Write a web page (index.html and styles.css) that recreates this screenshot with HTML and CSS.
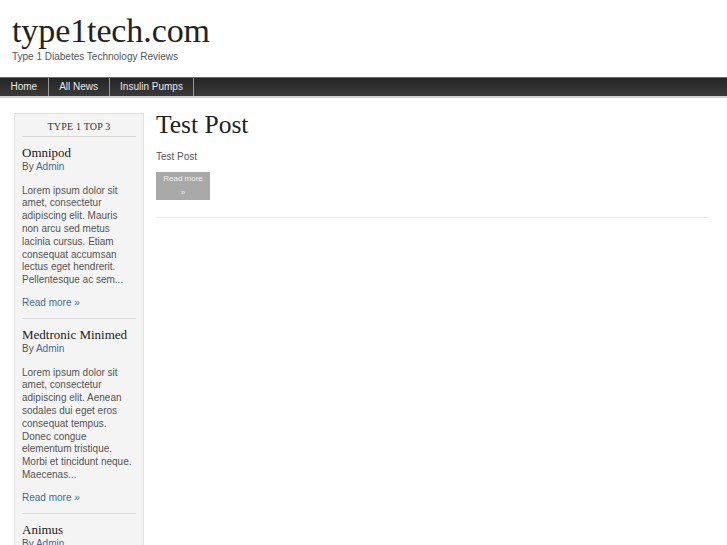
FILE: index.html
```html
<!DOCTYPE html>
<html>
<head>
<meta charset="utf-8">
<title>type1tech.com</title>
<link rel="stylesheet" href="styles.css">
</head>
<body>
<header class="site-header">
  <h1 class="site-title">type1tech.com</h1>
  <p class="site-tagline">Type 1 Diabetes Technology Reviews</p>
</header>
<nav class="main-nav">
  <a class="nav-item" href="#">Home</a>
  <a class="nav-item" href="#">All News</a>
  <a class="nav-item" href="#">Insulin Pumps</a>
</nav>
<div class="layout">
  <aside class="sidebar">
    <h3 class="widget-title">Type 1 Top 3</h3>
    <div class="widget-item">
      <h4 class="item-title">Omnipod</h4>
      <div class="item-by">By <a href="#">Admin</a></div>
      <p class="item-text">Lorem ipsum dolor sit amet, consectetur adipiscing elit. Mauris non arcu sed metus lacinia cursus. Etiam consequat accumsan lectus eget hendrerit. Pellentesque ac sem...</p>
      <a class="item-more" href="#">Read more »</a>
    </div>
    <div class="widget-item">
      <h4 class="item-title">Medtronic Minimed</h4>
      <div class="item-by">By <a href="#">Admin</a></div>
      <p class="item-text">Lorem ipsum dolor sit amet, consectetur adipiscing elit. Aenean sodales dui eget eros consequat tempus. Donec congue elementum tristique. Morbi et tincidunt neque. Maecenas...</p>
      <a class="item-more" href="#">Read more »</a>
    </div>
    <div class="widget-item">
      <h4 class="item-title">Animus</h4>
      <div class="item-by">By <a href="#">Admin</a></div>
      <p class="item-text">Lorem ipsum dolor sit amet, consectetur adipiscing elit.</p>
    </div>
  </aside>
  <main class="content">
    <article class="post">
      <h2 class="post-title">Test Post</h2>
      <p class="post-text">Test Post</p>
      <a class="post-more" href="#"><span class="more-line">Read more</span><span class="more-line">»</span></a>
    </article>
  </main>
</div>
</body>
</html>
```

FILE: styles.css
```css
html, body {
  margin: 0;
  padding: 0;
  background: #fff;
  height: 545px;
  overflow: hidden;
}
body {
  font-family: "Liberation Sans", Arial, sans-serif;
  color: #555;
}
a { text-decoration: none; }

.site-header {
  padding: 14px 0 0 12px;
  height: 63px;
  box-sizing: border-box;
}
.site-title {
  margin: 0;
  font-family: "Liberation Serif", "Times New Roman", serif;
  font-weight: normal;
  font-size: 34px;
  line-height: 34px;
  color: #222;
  letter-spacing: -0.1px;
}
.site-tagline {
  margin: 3px 0 0 0;
  font-size: 10px;
  line-height: 12px;
  color: #555;
}

.main-nav {
  margin-top: 14px;
  display: flex;
  height: 18px;
  border-top: 1px solid #6a6a6a;
  border-bottom: 2px solid #cfcfcf;
  background: linear-gradient(#252525, #3a3a3a);
}
.nav-item {
  display: block;
  padding: 0 10.5px;
  font-size: 10px;
  line-height: 18px;
  color: #e8e8e8;
  border-right: 1px solid #9a9a9a;
}

.layout {
  display: flex;
  align-items: flex-start;
  margin-left: 14px;
  width: 695px;
}
.sidebar {
  width: 130px;
  box-sizing: border-box;
  margin-top: 15px;
  padding: 6px 7px 0 7px;
  background: #f4f4f4;
  border: 1px solid #e0e0e0;
  border-bottom: none;
  height: 440px;
  overflow: hidden;
  flex-shrink: 0;
}
.widget-title {
  margin: 0;
  padding-bottom: 2px;
  font-family: "Liberation Serif", "Times New Roman", serif;
  font-weight: normal;
  font-size: 10px;
  line-height: 14px;
  text-transform: uppercase;
  text-align: center;
  letter-spacing: 0.2px;
  color: #333;
  border-bottom: 1px solid #d6d6d6;
}
.widget-item {
  padding: 8px 0 9px 0;
  border-bottom: 1px solid #dcdcdc;
}
.item-title {
  margin: 0;
  font-family: "Liberation Serif", "Times New Roman", serif;
  font-weight: normal;
  font-size: 13px;
  line-height: 16px;
  color: #222;
}
.item-by {
  font-size: 10px;
  line-height: 12px;
  color: #555;
}
.item-by a { color: #3c6d9c; }
.item-text {
  margin: 11.6px 0 10px 0;
  font-size: 10px;
  line-height: 12.8px;
  color: #555;
}
.item-more {
  display: block;
  font-size: 10px;
  line-height: 12px;
  color: #3c6d9c;
}

.content {
  flex: 1;
  margin-left: 12px;
  margin-top: 12px;
}
.post {
  padding-bottom: 17px;
  border-bottom: 1px solid #ececec;
}
.post-title {
  margin: 0;
  font-family: "Liberation Serif", "Times New Roman", serif;
  font-weight: normal;
  font-size: 25.5px;
  line-height: 30px;
  color: #222;
}
.post-text {
  margin: 11px 0 9px 0;
  font-size: 10px;
  line-height: 12px;
  color: #555;
}
.post-more {
  display: block;
  width: 54px;
  height: 28px;
  background: #a9a9a9;
  color: #f0f0f0;
  font-size: 8px;
  line-height: 14px;
  text-align: center;
}
.more-line {
  display: block;
}
```
